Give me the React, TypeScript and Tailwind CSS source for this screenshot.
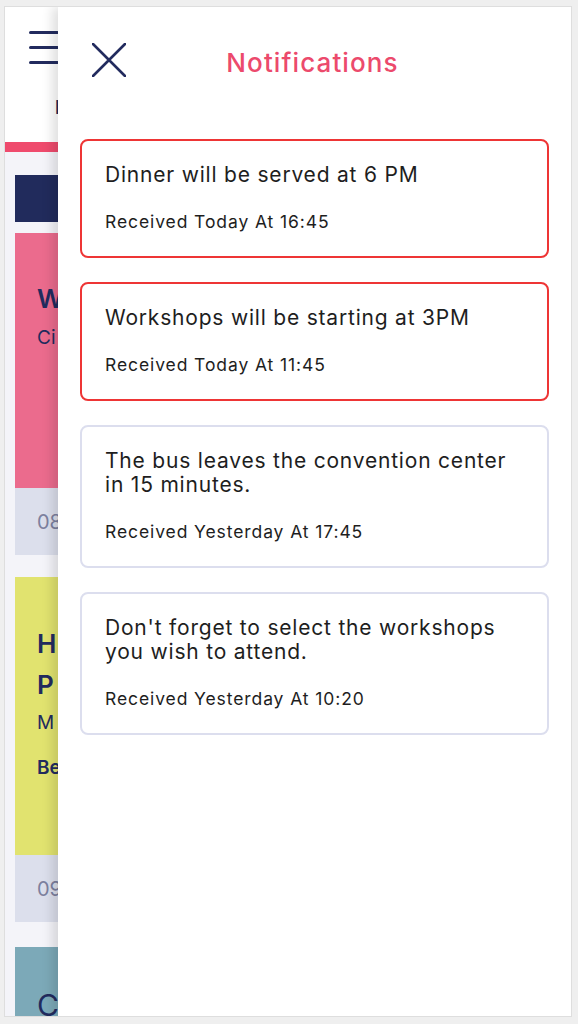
import React from "react";

const notifications = [
  { text: "Dinner will be served at 6 PM", time: "Received Today At 16:45", unread: true },
  { text: "Workshops will be starting at 3PM", time: "Received Today At 11:45", unread: true },
  { text: "The bus leaves the convention center in 15 minutes.", time: "Received Yesterday At 17:45", unread: false },
  { text: "Don't forget to select the workshops you wish to attend.", time: "Received Yesterday At 10:20", unread: false },
];

export default function App() {
  return (
    <div
      className="w-[578px] h-[1024px] bg-[#efefef] pt-[6px] pl-[4px] overflow-hidden"
      style={{ fontFamily: "Inter, 'Noto Sans', sans-serif" }}
    >
      <div className="relative w-[568px] h-[1011px] border border-[#dedede] bg-[#f4f4f9] overflow-hidden">
        {/* Background app */}
        <div className="bg-white h-[135px] flex flex-col">
          <div className="pt-[24px] pl-[24px] flex flex-col gap-[12px]">
            <div className="w-[30px] h-[3px] bg-[#222b5e] rounded-full" />
            <div className="w-[30px] h-[3px] bg-[#222b5e] rounded-full" />
            <div className="w-[30px] h-[3px] bg-[#222b5e] rounded-full" />
          </div>
          <div className="mt-[30px] pl-[50px] text-[18px] text-[#222b5e] font-semibold">E</div>
        </div>
        <div className="h-[10px] bg-[#ef4b6d]" />
        <div className="px-[10px] pt-[23px] flex flex-col">
          <div className="h-[47px] bg-[#212b5c]" />
          <div className="mt-[11px] flex flex-col">
            <div className="h-[255px] bg-[#eb6b8d] px-[22px] pt-[46px] text-[#222b5e]">
              <div className="text-[26px] font-semibold">W</div>
              <div className="text-[19px] mt-[6px]">Ci</div>
            </div>
            <div className="h-[67px] bg-[#dcdfec] px-[22px] flex items-center text-[20px] text-[#7d819f]">08</div>
          </div>
          <div className="mt-[22px] flex flex-col">
            <div className="h-[278px] bg-[#e1e36f] px-[22px] pt-[46px] text-[#222b5e]">
              <div className="text-[26px] font-semibold leading-[41px]">H</div>
              <div className="text-[26px] font-semibold leading-[41px]">P</div>
              <div className="text-[19px] mt-[4px]">M</div>
              <div className="text-[19px] mt-[16px] font-semibold">Be</div>
            </div>
            <div className="h-[67px] bg-[#dcdfec] px-[22px] flex items-center text-[20px] text-[#7d819f]">09</div>
          </div>
          <div className="mt-[25px] h-[80px] bg-[#7ca9b8] px-[22px] pt-[40px] text-[30px] leading-[36px] text-[#222b5e]">C</div>
        </div>

        {/* Drawer overlay */}
        <div className="absolute top-0 bottom-0 left-[53px] right-0 bg-white shadow-[-6px_0_10px_rgba(0,0,0,0.12)] flex flex-col">
          <div className="relative h-[113px] flex items-center justify-center">
            <button className="absolute left-[34px] top-[36px] w-[34px] h-[34px] flex items-center justify-center">
              <svg width="34" height="34" viewBox="0 0 34 34" fill="none">
                <path d="M1 1L33 33M33 1L1 33" stroke="#222b5e" strokeWidth="2.6" strokeLinecap="round" />
              </svg>
            </button>
            <h1 className="text-[26px] font-medium text-[#ec4a6c] tracking-[1.1px] mt-[-2px] ml-[-4px]">Notifications</h1>
          </div>
          <div className="px-[22px] pt-[19px] flex flex-col gap-[24px]">
            {notifications.map((n, i) => (
              <div
                key={i}
                className={`rounded-[8px] border-2 pl-[23px] pr-[18px] pt-[22px] pb-[23px] ${
                  n.unread ? "border-[#ee3535]" : "border-[#dcdeee]"
                }`}
              >
                <div className="text-[21px] leading-[24px] tracking-[0.8px] text-[#1e1e1e]">{n.text}</div>
                <div className="mt-[24px] text-[17.5px] leading-[22px] tracking-[0.9px] text-[#1e1e1e]">{n.time}</div>
              </div>
            ))}
          </div>
        </div>
      </div>
    </div>
  );
}
